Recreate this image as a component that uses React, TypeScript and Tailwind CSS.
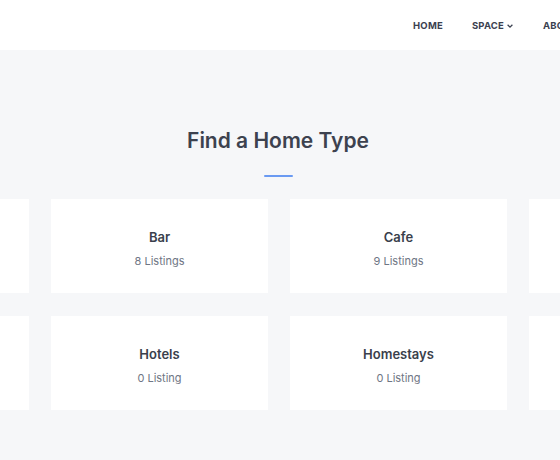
const rows = [
    [
        { name: "Apartments", count: "4 Listings" },
        { name: "Bar", count: "8 Listings" },
        { name: "Cafe", count: "9 Listings" },
        { name: "Coworking", count: "2 Listings" },
    ],
    [
        { name: "Hostels", count: "0 Listing" },
        { name: "Hotels", count: "0 Listing" },
        { name: "Homestays", count: "0 Listing" },
        { name: "Villas", count: "0 Listing" },
    ],
]

const App = () => {
    return (
        <div className="min-h-[460px] overflow-hidden bg-[#f6f7f9] font-['Inter',sans-serif]">
            <header className="flex h-[50px] items-center justify-end bg-white pt-[2px]">
                <nav className="flex translate-x-[18px] items-center gap-x-[29px] text-[9.5px] font-bold uppercase tracking-[0.2px] text-[#3b4150]">
                    <a>Home</a>
                    <a className="flex items-center gap-x-[2px]">
                        Space
                        <svg width="8" height="8" viewBox="0 0 10 10" fill="none" stroke="currentColor" strokeWidth="1.6">
                            <path d="M2 3.5 5 6.5 8 3.5" />
                        </svg>
                    </a>
                    <a>About</a>
                </nav>
            </header>

            <section className="pt-[77px]">
                <h2 className="pr-[4px] text-center text-[21px] font-semibold leading-[28px] text-[#3d424f]">
                    Find a Home Type
                </h2>
                <div className="mx-auto mt-[20px] h-[2px] w-[29px] -translate-x-[2px] rounded bg-[#6a9af2]" />

                <div className="mt-[22px] flex flex-col gap-y-[23px]">
                    {rows.map((row, i) => (
                        <div key={i} className="flex -translate-x-[1px] justify-center gap-x-[22px]">
                            {row.map((item) => (
                                <div
                                    key={item.name}
                                    className="flex h-[94px] w-[217px] shrink-0 flex-col items-center bg-white pt-[30px]"
                                >
                                    <p className="text-[13px] font-semibold leading-[16px] text-[#3a3f4c]">{item.name}</p>
                                    <p className="mt-[9px] text-[11px] leading-[14px] text-[#6f7684]">{item.count}</p>
                                </div>
                            ))}
                        </div>
                    ))}
                </div>
            </section>
        </div>
    )
}

export default App
